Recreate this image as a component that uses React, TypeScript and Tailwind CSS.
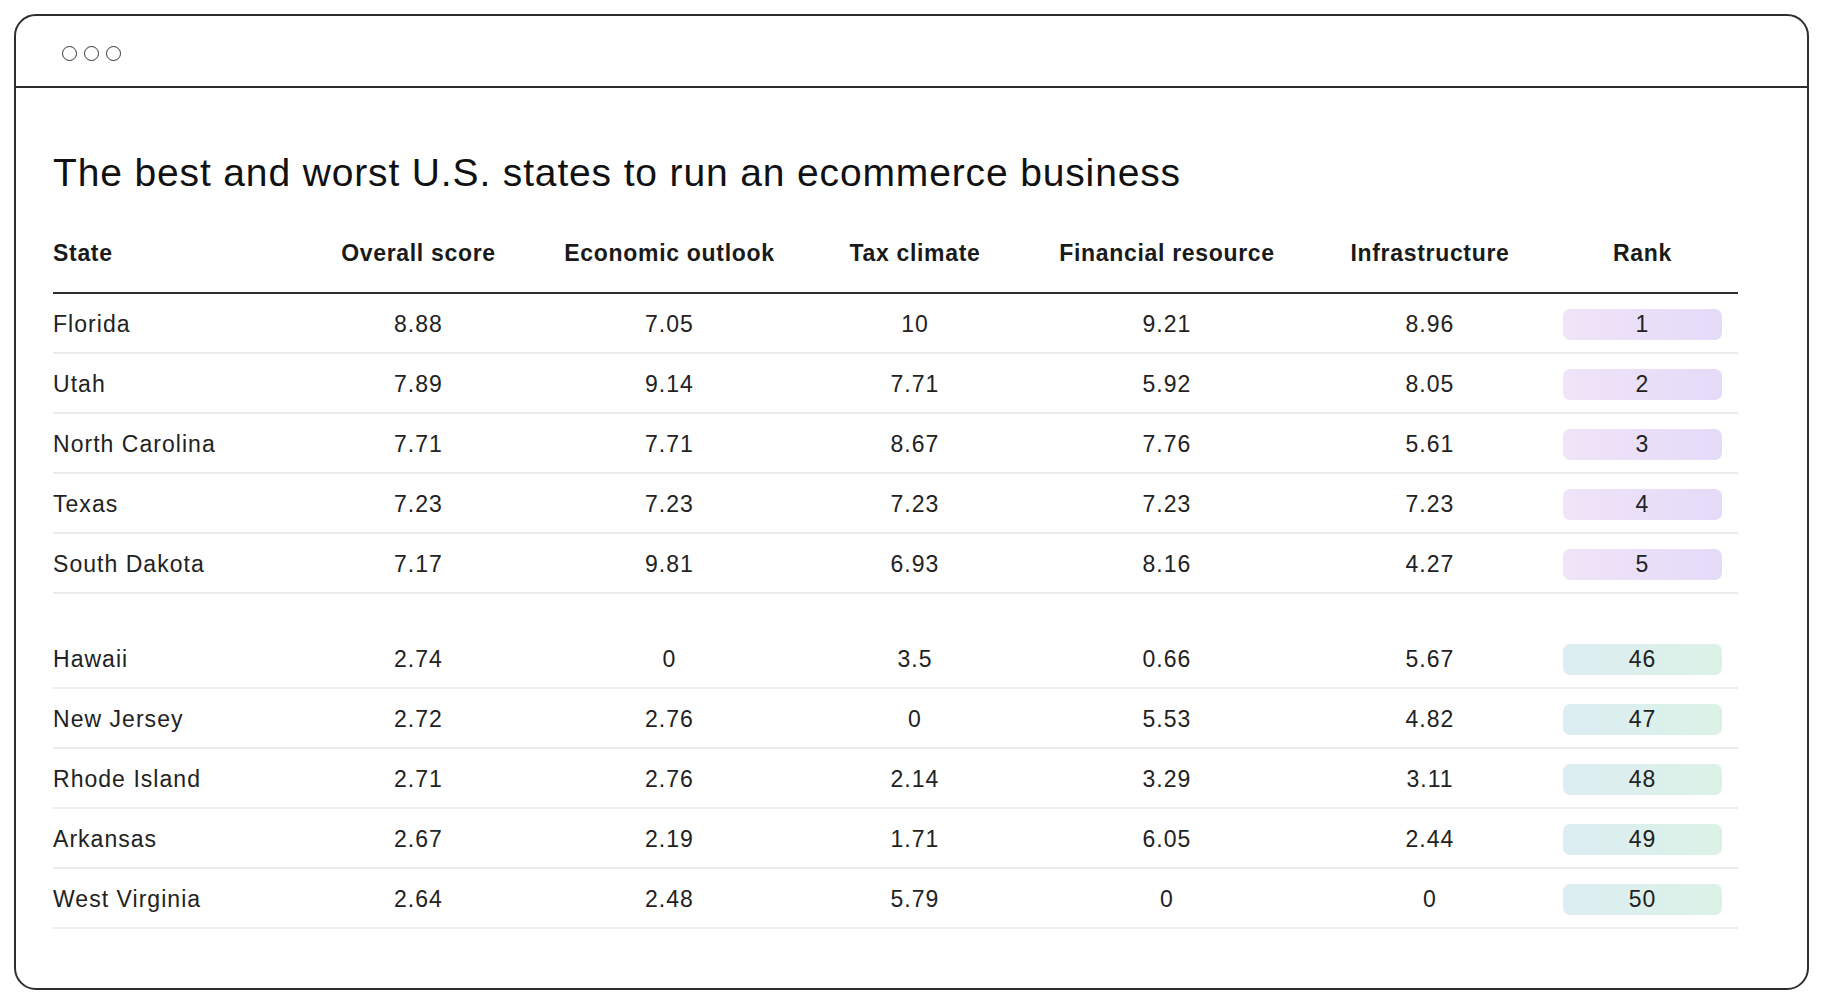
const top = [
  { state: "Florida", overall: "8.88", econ: "7.05", tax: "10", fin: "9.21", infra: "8.96", rank: 1 },
  { state: "Utah", overall: "7.89", econ: "9.14", tax: "7.71", fin: "5.92", infra: "8.05", rank: 2 },
  { state: "North Carolina", overall: "7.71", econ: "7.71", tax: "8.67", fin: "7.76", infra: "5.61", rank: 3 },
  { state: "Texas", overall: "7.23", econ: "7.23", tax: "7.23", fin: "7.23", infra: "7.23", rank: 4 },
  { state: "South Dakota", overall: "7.17", econ: "9.81", tax: "6.93", fin: "8.16", infra: "4.27", rank: 5 },
];

const bottom = [
  { state: "Hawaii", overall: "2.74", econ: "0", tax: "3.5", fin: "0.66", infra: "5.67", rank: 46 },
  { state: "New Jersey", overall: "2.72", econ: "2.76", tax: "0", fin: "5.53", infra: "4.82", rank: 47 },
  { state: "Rhode Island", overall: "2.71", econ: "2.76", tax: "2.14", fin: "3.29", infra: "3.11", rank: 48 },
  { state: "Arkansas", overall: "2.67", econ: "2.19", tax: "1.71", fin: "6.05", infra: "2.44", rank: 49 },
  { state: "West Virginia", overall: "2.64", econ: "2.48", tax: "5.79", fin: "0", infra: "0", rank: 50 },
];

type Row = (typeof top)[number];

const cols = "grid grid-cols-[240px_251px_251px_240px_264px_262px_1fr]";

function TableRow({ row, best }: { row: Row; best: boolean }) {
  return (
    <div className={`${cols} h-[60px] items-center border-b-2 border-[#ececec] pt-[2px] text-[23px] leading-none tracking-[0.045em] text-[#222]`}>
      <div>{row.state}</div>
      <div className="text-center">{row.overall}</div>
      <div className="text-center">{row.econ}</div>
      <div className="text-center">{row.tax}</div>
      <div className="text-center">{row.fin}</div>
      <div className="text-center">{row.infra}</div>
      <div
        className={`ml-[2px] flex h-[31px] w-[159px] items-center justify-center rounded-[7px] bg-gradient-to-r ${
          best ? "from-[#f0e4f8] to-[#e5dbf9]" : "from-[#dcedf3] to-[#dcf2e6]"
        }`}
      >
        {row.rank}
      </div>
    </div>
  );
}

export default function App() {
  return (
    <div className="h-[1004px] bg-white p-[14px] font-['Liberation_Sans',Arial,sans-serif]">
      <div className="flex h-full flex-col rounded-[22px] border-2 border-[#2e2e2e]">
        {/* window bar */}
        <div className="flex h-[72px] items-center gap-[7px] border-b-2 border-[#2e2e2e] pl-[46px] pt-[4px]">
          <span className="h-[15px] w-[15px] rounded-full border-[1.5px] border-[#333]" />
          <span className="h-[15px] w-[15px] rounded-full border-[1.5px] border-[#333]" />
          <span className="h-[15px] w-[15px] rounded-full border-[1.5px] border-[#333]" />
        </div>

        <div className="pl-[37px] pt-[65px]">
          <h1 className="text-[39px] leading-none tracking-[0.022em] text-[#111]">
            The best and worst U.S. states to run an ecommerce business
          </h1>

          <div className="mt-[50px] w-[1685px]">
            <div className={`${cols} border-b-2 border-[#2e2e2e] pb-[27px] text-[23px] font-bold leading-none tracking-[0.03em] text-[#1a1a1a]`}>
              <div>State</div>
              <div className="text-center">Overall score</div>
              <div className="text-center">Economic outlook</div>
              <div className="text-center">Tax climate</div>
              <div className="text-center">Financial resource</div>
              <div className="text-center">Infrastructure</div>
              <div className="ml-[2px] w-[159px] text-center">Rank</div>
            </div>

            {top.map((r) => (
              <TableRow key={r.state} row={r} best />
            ))}
            <div className="h-[35px]" />
            {bottom.map((r) => (
              <TableRow key={r.state} row={r} best={false} />
            ))}
          </div>
        </div>
      </div>
    </div>
  );
}
